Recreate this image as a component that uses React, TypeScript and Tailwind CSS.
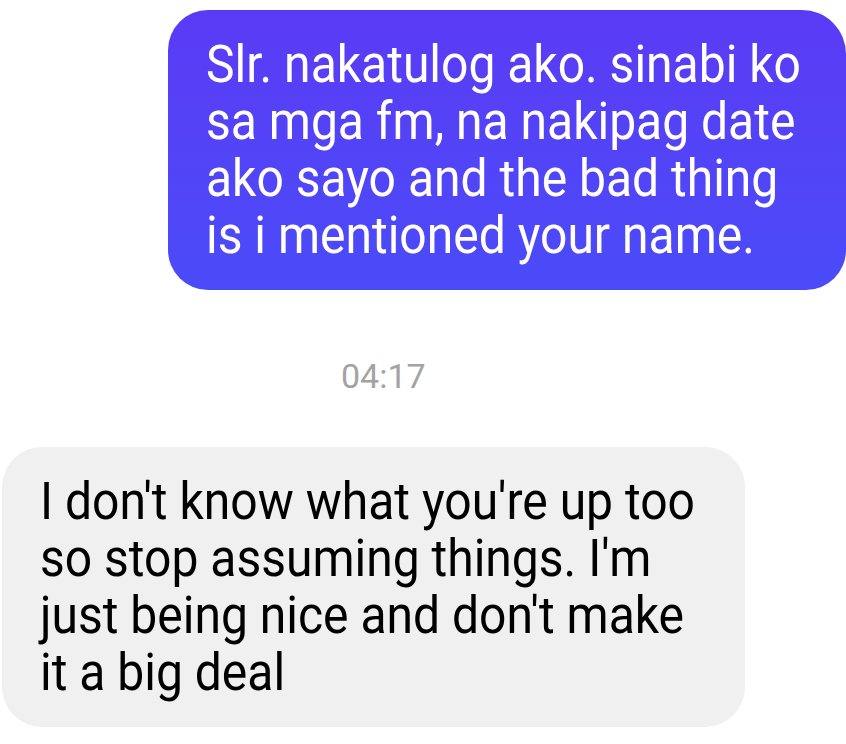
import React from "react";

const font = { fontFamily: "Roboto, 'Noto Sans', Arial, sans-serif" };

export default function App() {
  const sent = [
    "Slr. nakatulog ako. sinabi ko",
    "sa mga fm, na nakipag date",
    "ako sayo and the bad thing",
    "is i mentioned your name.",
  ];
  const recv = [
    "I don't know what you're up too",
    "so stop assuming things. I'm",
    "just being nice and don't make",
    "it a big deal",
  ];
  return (
    <div
      className="w-[846px] h-[744px] bg-white overflow-hidden flex flex-col"
      style={font}
    >
      <div className="pt-[10px] flex">
        <div className="ml-[168px] w-[678px] rounded-[40px] rounded-tr-[44px] bg-gradient-to-b from-[#5a3bf5] to-[#4a4bf9] px-[38px] py-[26px] text-white text-[48px] leading-[57px]">
          {sent.map((l, i) => (
            <div key={i} className="whitespace-nowrap origin-center scale-y-[1.08]">
              {l}
            </div>
          ))}
        </div>
      </div>
      <div className="mt-[66px] pl-[341px] text-[34px] leading-[40px] text-[#a3a3a3] whitespace-nowrap">
        04:17
      </div>
      <div className="mt-[51px] flex">
        <div className="ml-[2px] w-[743px] rounded-[40px] bg-[#f0f0f0] px-[38px] py-[26px] text-black text-[48px] leading-[57px]">
          {recv.map((l, i) => (
            <div key={i} className="whitespace-nowrap origin-center scale-y-[1.08]">
              {l}
            </div>
          ))}
        </div>
      </div>
    </div>
  );
}
